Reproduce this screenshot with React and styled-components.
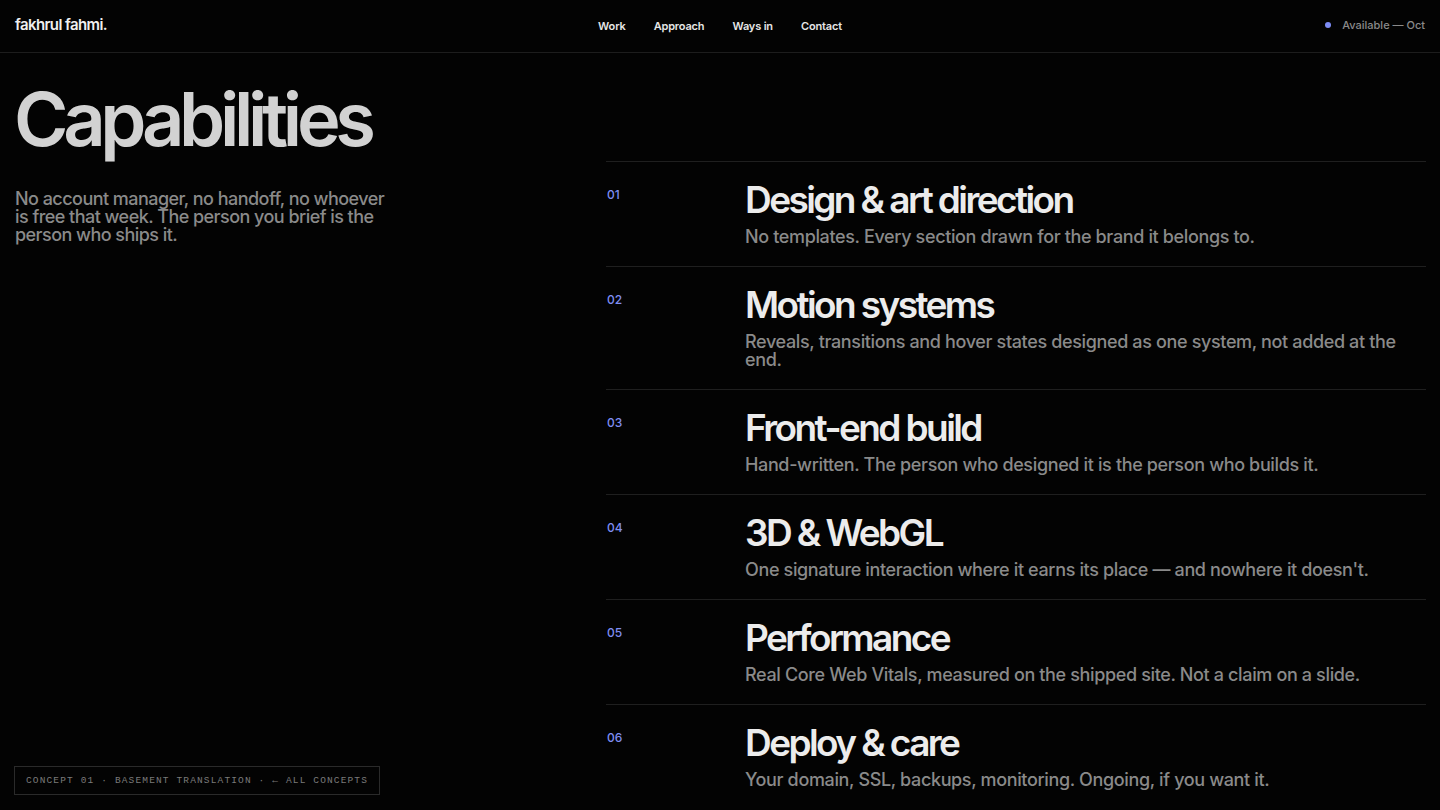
import React from "react";
import styled, { createGlobalStyle } from "styled-components";

const GlobalStyle = createGlobalStyle`
  * { box-sizing: border-box; }
  html, body {
    margin: 0;
    background: #030303;
    color: #e8e8e8;
    font-family: Inter, "Liberation Sans", sans-serif;
    -webkit-font-smoothing: antialiased;
  }
`;

const Header = styled.header`
  height: 53px;
  display: grid;
  grid-template-columns: 1fr auto 1fr;
  align-items: center;
  padding: 0 15px;
  border-bottom: 1px solid #1d1d1d;
`;

const Logo = styled.div`
  font-size: 15px;
  font-weight: 600;
  letter-spacing: -0.04em;
  color: #f0f0f0;
  margin-top: -3px;
`;

const Nav = styled.nav`
  display: flex;
  gap: 28px;
`;

const NavLink = styled.a`
  font-size: 11px;
  font-weight: 600;
  color: #e6e6e6;
  text-decoration: none;
  letter-spacing: -0.015em;
`;

const Status = styled.div`
  justify-self: end;
  display: flex;
  align-items: center;
  gap: 11px;
  font-size: 11px;
  font-weight: 500;
  color: #8a8a8a;
  margin-top: -2px;
`;

const Dot = styled.span`
  width: 6px;
  height: 6px;
  border-radius: 50%;
  background: #7d8cf5;
`;

const Main = styled.main`
  display: grid;
  grid-template-columns: 1fr 820px;
  padding: 0 14px 0 15px;
`;

const Intro = styled.section`
  padding-top: 29px;
`;

const Title = styled.h1`
  margin: 0 0 0 -1px;
  font-size: 74px;
  font-weight: 600;
  letter-spacing: -0.072em;
  line-height: 1;
  color: #d2d2d2;
`;

const Lead = styled.p`
  margin: 34px 0 0;
  max-width: 378px;
  font-size: 18px;
  line-height: 18px;
  font-weight: 500;
  letter-spacing: -0.03em;
  color: #8a8a8a;
`;

const List = styled.ol`
  list-style: none;
  margin: 108px 0 0;
  padding: 0;
`;

const Row = styled.li`
  display: grid;
  grid-template-columns: 139px 1fr;
  padding: 20px 0 20px;
  border-top: 1px solid #1f1f1f;
`;

const Num = styled.span`
  padding-top: 5px;
  padding-left: 1px;
  font-size: 12px;
  font-weight: 500;
  color: #7f8ef3;
`;

const Body = styled.div`
  display: flex;
  flex-direction: column;
  gap: 10px;
`;

const ItemTitle = styled.h2`
  margin: 0;
  font-size: 37px;
  line-height: 36px;
  font-weight: 600;
  letter-spacing: -0.07em;
  color: #ececec;
`;

const ItemText = styled.p`
  margin: 0;
  font-size: 18px;
  line-height: 18px;
  font-weight: 500;
  letter-spacing: -0.02em;
  color: #8a8a8a;
  padding-right: 20px;
`;

const ConceptTag = styled.div`
  position: fixed;
  left: 14px;
  bottom: 15px;
  padding: 8px 11px;
  border: 1px solid #2a2a2a;
  background: #030303;
  font-family: "Liberation Mono", "DejaVu Sans Mono", monospace;
  font-size: 9.5px;
  line-height: 11px;
  letter-spacing: 0.12em;
  color: #7a7a7a;
  white-space: nowrap;
`;

const items = [
  ["01", "Design & art direction", "No templates. Every section drawn for the brand it belongs to."],
  ["02", "Motion systems", "Reveals, transitions and hover states designed as one system, not added at the end."],
  ["03", "Front-end build", "Hand-written. The person who designed it is the person who builds it."],
  ["04", "3D & WebGL", "One signature interaction where it earns its place \u2014 and nowhere it doesn't."],
  ["05", "Performance", "Real Core Web Vitals, measured on the shipped site. Not a claim on a slide."],
  ["06", "Deploy & care", "Your domain, SSL, backups, monitoring. Ongoing, if you want it."],
];

export default function App() {
  return (
    <>
      <GlobalStyle />
      <Header>
        <Logo>fakhrul fahmi.</Logo>
        <Nav>
          <NavLink href="#work">Work</NavLink>
          <NavLink href="#approach">Approach</NavLink>
          <NavLink href="#ways">Ways in</NavLink>
          <NavLink href="#contact">Contact</NavLink>
        </Nav>
        <Status>
          <Dot />
          Available — Oct
        </Status>
      </Header>
      <Main>
        <Intro>
          <Title>Capabilities</Title>
          <Lead>
            No account manager, no handoff, no whoever is free that week. The
            person you brief is the person who ships it.
          </Lead>
        </Intro>
        <List>
          {items.map(([n, title, text]) => (
            <Row key={n}>
              <Num>{n}</Num>
              <Body>
                <ItemTitle>{title}</ItemTitle>
                <ItemText>{text}</ItemText>
              </Body>
            </Row>
          ))}
        </List>
      </Main>
      <ConceptTag>CONCEPT 01 · BASEMENT TRANSLATION · ← ALL CONCEPTS</ConceptTag>
    </>
  );
}
